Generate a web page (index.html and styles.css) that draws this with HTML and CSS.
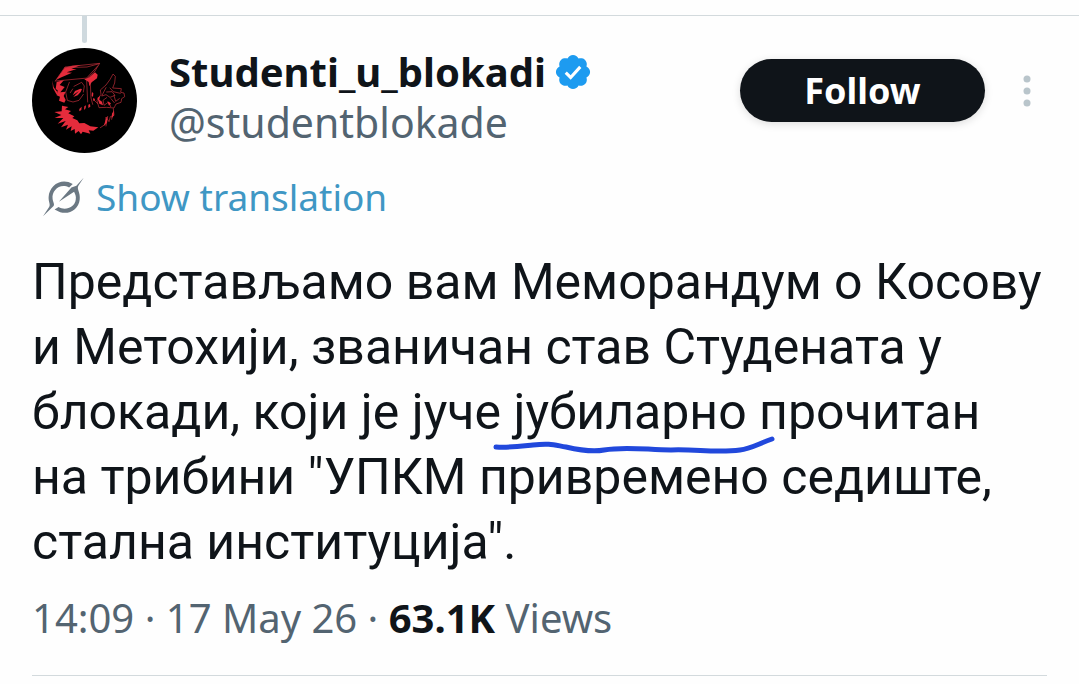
FILE: index.html
```html
<!DOCTYPE html>
<html lang="sr">
<head>
<meta charset="utf-8">
<meta name="viewport" content="width=device-width, initial-scale=1">
<title>Studenti_u_blokadi</title>
<link rel="stylesheet" href="styles.css">
</head>
<body>
<main class="post">
  <header class="header">
    <div class="avatar-column">
      <span class="thread-line"></span>
      <svg class="avatar" viewBox="36 144 315 315" role="img" aria-label="Avatar">
        <circle cx="193.500" cy="301.500" r="157.500" fill="#000"/>
        <g fill="#e52c3c">
          <path d="M134 203 L157 197 L182 195 L154 207 L170 207 L140 217 L156 218 L121 233 L108 240 Z"/>
          <path d="M110 246 L132 240 L119 255 L134 261 L121 277 L137 275 L131 288 L137 300 L133 308 L117 302 L120 290 L110 286 L113 271 L107 267 Z"/>
          <path d="M97 241 L101 262 L112 276 L110 284 L99 264 Z"/>
          <path d="M208 232 L225 217 L233 224 L231 235 L215 247 L208 259 L206 246 L193 238 Z"/>
          <path d="M126 317 L145 321 L135 328 L153 333 L145 340 L163 349 L157 354 L172 361 L178 370 L193 369 L211 379 L235 382 L220 392 L206 391 L211 401 L188 395 L183 403 L176 393 L165 401 L164 387 L152 393 L155 379 L138 389 L144 374 L123 382 L137 363 L113 371 L130 354 L104 354 L124 345 L103 336 L125 334 Z"/>
          <path d="M158 286 L165 273 L181 266 L186 267 L182 276 L173 286 L160 291 L168 282 L177 273 Z"/>
          <path d="M178 327 l7 -7 -1 10 -6 4z M193 319 l5 -3 -1 9 -5 5z M205 314 l5 -2 1 8 -6 4z M216 276 l4 4 -1 11 -4 -4z M220 294 l5 3 -2 7 -4 -3z"/>
        </g>
        <g fill="none" stroke="#c7303d" stroke-width="2" stroke-linejoin="round" stroke-linecap="round">
          <path d="M106 243 L135 201 L239 190 L223 216 L203 234 L107 243 M135 203 L201 201 L238 191 M202 232 L233 198"/>
          <path d="M148 247 L137 276 L142 301 L159 306 L177 301 L190 283 M162 259 L185 247 L193 258 L190 276 M151 278 L158 267 M200 242 L203 306 M211 250 L213 294 L218 313 M222 300 L233 311"/>
          <path d="M280 223 L286 229 L284 249 L278 264 L304 266 L302 277 L312 279 L314 290 L305 296 L303 307 L288 312 L282 324 L260 322 L237 323 L231 302 L243 283 L241 270 L258 255 L269 240 Z"/>
          <path d="M258 263 L245 288 L258 284 L270 292 L285 286 L276 275 L260 276 M270 264 L280 275 L301 280 M282 287 L287 304 L298 296 M260 293 L249 301 L252 316 L266 306 L272 320 M273 296 L283 308"/>
          <path d="M280 326 L282 346 L271 350 L267 365 L258 351 L256 373 L241 383 M263 350 L258 378 M279 339 L275 358"/>
        </g>
        <path d="M232 294 L240 288 L238 299 L246 305 L249 316 L238 311 Z M262 304 L273 310 L267 317 Z M257 360 L262 347 L261 368 L251 378 Z M276 341 L282 331 L281 347 L275 355 Z" fill="#e52c3c"/>
      </svg>
    </div>
    <div class="identity">
      <div class="name-row">
        <h1 class="name">Studenti_u_blokadi</h1>
        <svg class="verified" viewBox="0 0 22 22" role="img" aria-label="Verified account"><path fill="#1d9bf0" d="M20.396 11c-.018-.646-.215-1.275-.57-1.816-.354-.54-.852-.972-1.438-1.246.223-.607.27-1.264.14-1.897-.131-.634-.437-1.218-.882-1.687-.47-.445-1.053-.75-1.687-.882-.633-.13-1.290-.083-1.897.14-.273-.587-.704-1.086-1.245-1.440S11.647 1.620 11 1.604c-.646.017-1.273.213-1.813.568s-.969.854-1.240 1.440c-.608-.223-1.267-.272-1.902-.14-.635.130-1.220.436-1.690.882-.445.470-.749 1.055-.878 1.688-.130.633-.080 1.290.144 1.896-.587.274-1.087.705-1.443 1.245-.356.540-.555 1.170-.574 1.817.020.647.218 1.276.574 1.817.356.540.856.972 1.443 1.245-.224.606-.274 1.263-.144 1.896.130.634.433 1.218.877 1.688.470.443 1.054.747 1.687.878.633.132 1.290.084 1.897-.136.274.586.705 1.084 1.246 1.439.540.354 1.170.551 1.816.569.647-.016 1.276-.213 1.817-.567s.972-.854 1.245-1.440c.604.239 1.266.296 1.903.164.636-.132 1.220-.447 1.680-.907.460-.460.776-1.044.908-1.681s.075-1.299-.165-1.903c.586-.274 1.084-.705 1.439-1.246.354-.540.551-1.170.569-1.816z"/><path d="M7 11.400 L9.700 14 L15 8.200" fill="none" stroke="#fff" stroke-width="1.700"/></svg>
      </div>
      <p class="handle">@studentblokade</p>
    </div>
    <div class="actions">
      <button class="follow" type="button">Follow</button>
      <button class="more" type="button" aria-label="More"><svg viewBox="0 0 8 32"><g fill="#b9c5cb"><circle cx="4" cy="4" r="3.500"/><circle cx="4" cy="16" r="3.500"/><circle cx="4" cy="28" r="3.500"/></g></svg></button>
    </div>
  </header>
  <a class="translate" href="#">
    <svg class="translate-icon" viewBox="70 36 124 120" aria-hidden="true"><g fill="#6b7883"><path d="M193 38 L177 62 C171 72 184 83 181 104 C178 132 151 150 122 142 L105 134 L117 126 C138 139 166 126 169 104 C171 93 167 87 164 80 L118 110 L156 67 L171 62 Z"/><path d="M160 57 L149 67 C121 53 96 76 99 101 C100 112 106 116 102 123 L70 154 L88 127 C94 119 86 112 87 96 C89 61 126 36 160 57 Z"/></g></svg>
    <span>Show translation</span>
  </a>
  <p class="body">Представљамо вам Меморандум о Косову и Метохији, званичан став Студената у блокади, који је јуче <span class="marked">јубиларно<svg class="stroke" viewBox="0 0 284 18" aria-hidden="true"><path d="M3 11 C16 12 30 10 40 9 C57 7 61 9 73 11 C86 14 101 16 111 14 C133 10 155 14 178 14 C202 13 224 17 247 14 C257 13 265 8 279 3" fill="none" stroke="#2148dc" stroke-width="5" stroke-linecap="round"/></svg></span> прочитан на трибини "УПКМ привремено седиште, стална институција".</p>
  <p class="meta">14:09 · 17 May 26 · <strong>63.1K</strong> Views</p>
</main>
</body>
</html>
```
FILE: styles.css
```css
* {
  box-sizing: border-box;
}

body {
  margin: 0;
  background: #fefefe;
  color: #0f1419;
  font-family: "Noto Sans", sans-serif;
}

h1,
p {
  margin: 0;
}

button {
  border: 0;
  padding: 0;
  font: inherit;
  cursor: pointer;
}

.post {
  margin-top: 15px;
  padding: 0 32px;
  border-top: 1px solid #d3dadd;
}

.header {
  display: flex;
  align-items: flex-start;
  gap: 32px;
}

.avatar-column {
  display: flex;
  flex-direction: column;
  align-items: center;
  gap: 5px;
}

.thread-line {
  width: 5px;
  height: 27px;
  border-radius: 0 0 3px 3px;
  background: #cfd9de;
}

.avatar {
  width: 105px;
  height: 105px;
}

.identity {
  flex: 1;
  padding-top: 31px;
}

.name-row {
  display: flex;
  align-items: center;
  gap: 7px;
}

.name {
  font-size: 40px;
  line-height: 50px;
  font-weight: 700;
}

.verified {
  width: 40px;
  height: 40px;
}

.handle {
  color: #536471;
  font-size: 41px;
  line-height: 50px;
}

.actions {
  display: flex;
  align-items: center;
  gap: 38px;
  padding-top: 43px;
  padding-right: 16px;
}

.follow {
  width: 245px;
  height: 63px;
  border-radius: 32px;
  background: #0f1419;
  box-shadow: 0 2px 8px #0002;
  color: #fff;
  font-size: 36px;
  font-weight: 700;
}

.more {
  display: flex;
  background: none;
}

.more svg {
  width: 8px;
  height: 32px;
}

.translate {
  display: flex;
  align-items: center;
  gap: 12px;
  margin-top: 19px;
  padding-left: 11px;
  color: #3f97c4;
  font-size: 37px;
  line-height: 50px;
  text-decoration: none;
}

.translate-icon {
  width: 41px;
  height: 40px;
}

.body {
  margin-top: 28px;
  font-family: Roboto, sans-serif;
  font-size: 50px;
  line-height: 65px;
}

.marked {
  position: relative;
}

.stroke {
  position: absolute;
  left: -20px;
  bottom: -13px;
  width: 284px;
  height: 18px;
}

.meta {
  margin-top: 16px;
  padding-bottom: 30px;
  border-bottom: 1px solid #d3dadd;
  color: #536471;
  font-size: 40px;
  line-height: 54px;
}

.meta strong {
  color: #0f1419;
}
```
